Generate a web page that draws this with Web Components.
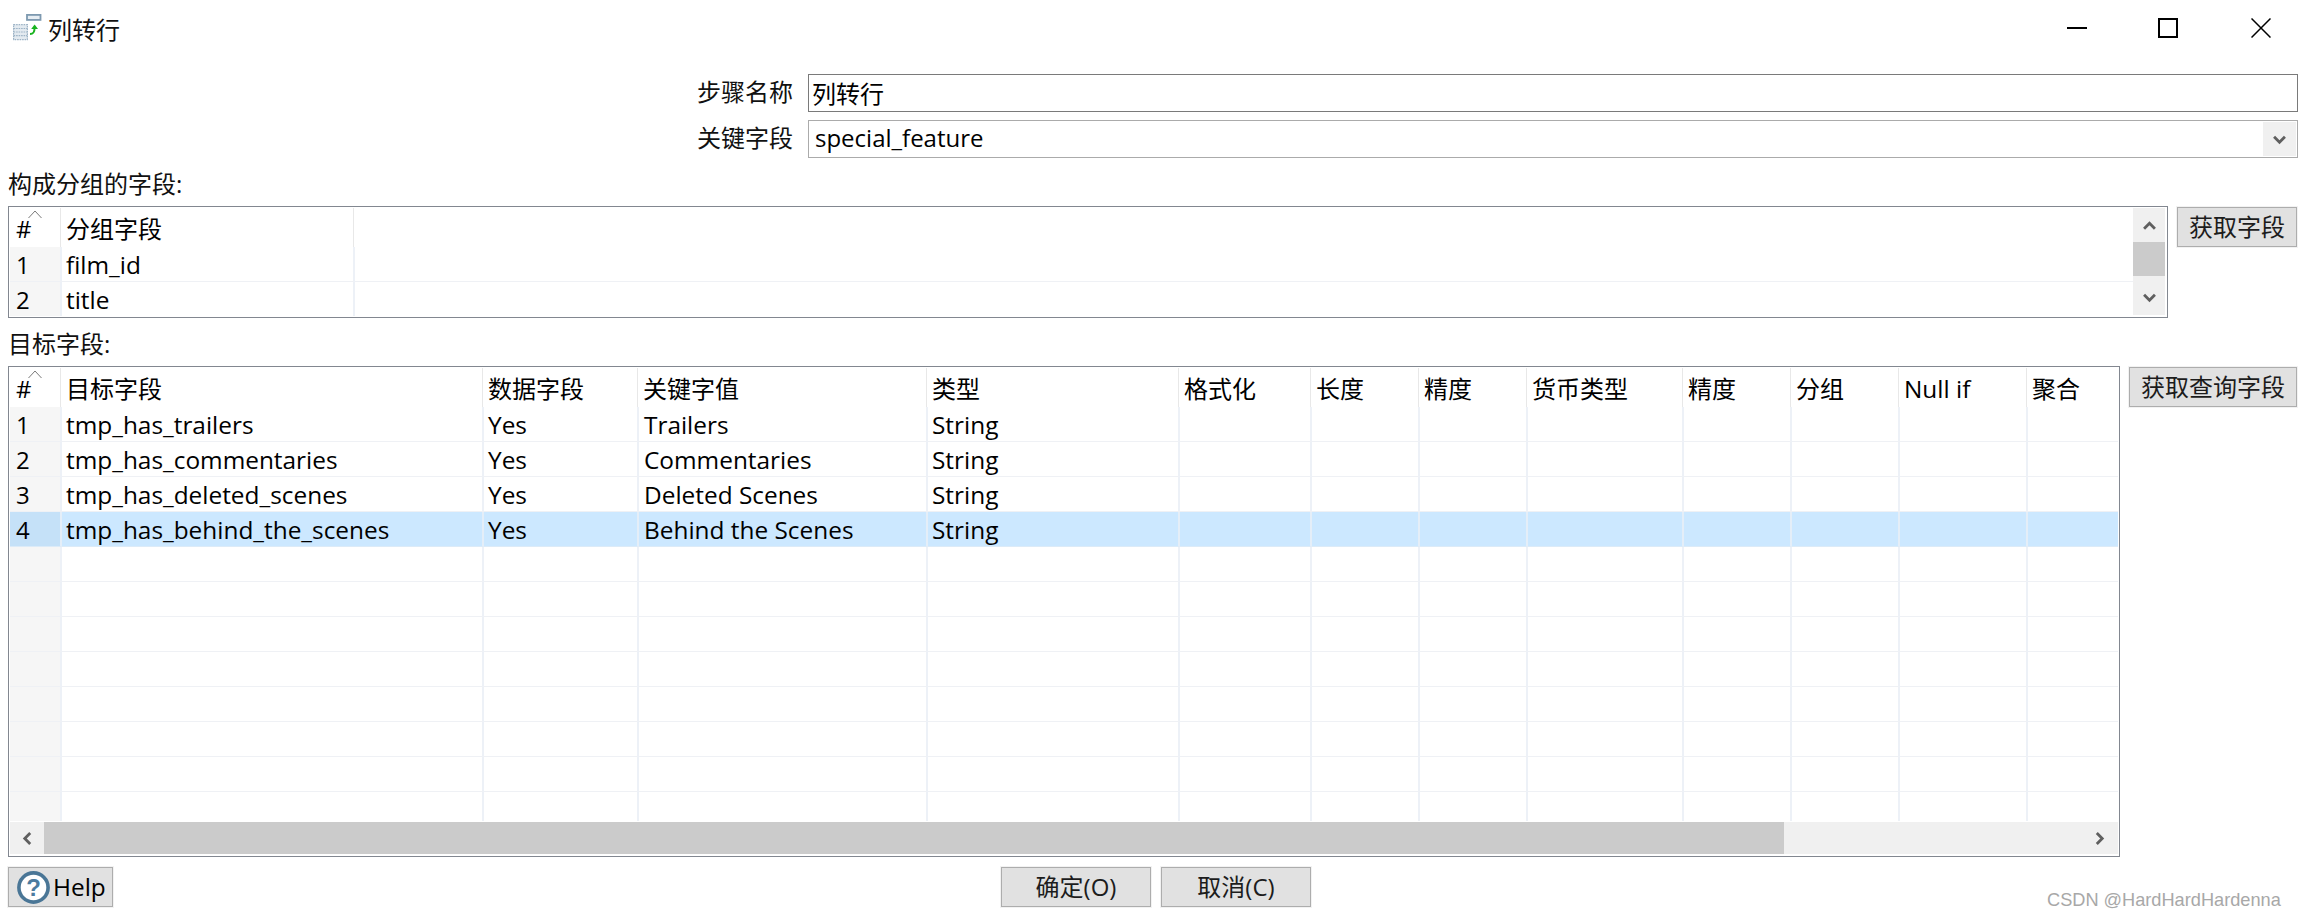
<!DOCTYPE html>
<html lang="zh">
<head>
<meta charset="utf-8">
<title>列转行</title>
<style>
html,body{margin:0;padding:0;background:#fff;}
</style>
</head>
<body>
<ui-app>
  <ui-titlebar>列转行</ui-titlebar>
  <ui-form-row label="步骤名称"><ui-textbox>列转行</ui-textbox></ui-form-row>
  <ui-form-row label="关键字段"><ui-combo>special_feature</ui-combo></ui-form-row>
  <ui-section>构成分组的字段:</ui-section>
  <ui-table-row button="获取字段" style="--table-w:2160px;--btn-w:120px;--h:112px;">
    <ui-table cols="52px 293px 1fr">
      <ui-tr head><ui-td num sort>#</ui-td><ui-td>分组字段</ui-td><ui-td end></ui-td></ui-tr>
      <ui-tr><ui-td num>1</ui-td><ui-td>film_id</ui-td><ui-td end></ui-td></ui-tr>
      <ui-tr><ui-td num>2</ui-td><ui-td>title</ui-td><ui-td end></ui-td></ui-tr>
      <ui-scrollbar slot="v" dir="v"></ui-scrollbar>
    </ui-table>
  </ui-table-row>
  <ui-section>目标字段:</ui-section>
  <ui-table-row button="获取查询字段" style="--table-w:2112px;--btn-w:168px;--h:491px;">
    <ui-table cols="52px 422px 155px 289px 252px 132px 108px 108px 156px 108px 108px 128px 1fr">
      <ui-tr head><ui-td num sort>#</ui-td><ui-td>目标字段</ui-td><ui-td>数据字段</ui-td><ui-td>关键字值</ui-td><ui-td>类型</ui-td><ui-td>格式化</ui-td><ui-td>长度</ui-td><ui-td>精度</ui-td><ui-td>货币类型</ui-td><ui-td>精度</ui-td><ui-td>分组</ui-td><ui-td>Null if</ui-td><ui-td end>聚合</ui-td></ui-tr>
      <ui-tr><ui-td num>1</ui-td><ui-td>tmp_has_trailers</ui-td><ui-td>Yes</ui-td><ui-td>Trailers</ui-td><ui-td>String</ui-td><ui-td></ui-td><ui-td></ui-td><ui-td></ui-td><ui-td></ui-td><ui-td></ui-td><ui-td></ui-td><ui-td></ui-td><ui-td end></ui-td></ui-tr>
      <ui-tr><ui-td num>2</ui-td><ui-td>tmp_has_commentaries</ui-td><ui-td>Yes</ui-td><ui-td>Commentaries</ui-td><ui-td>String</ui-td><ui-td></ui-td><ui-td></ui-td><ui-td></ui-td><ui-td></ui-td><ui-td></ui-td><ui-td></ui-td><ui-td></ui-td><ui-td end></ui-td></ui-tr>
      <ui-tr><ui-td num>3</ui-td><ui-td>tmp_has_deleted_scenes</ui-td><ui-td>Yes</ui-td><ui-td>Deleted Scenes</ui-td><ui-td>String</ui-td><ui-td></ui-td><ui-td></ui-td><ui-td></ui-td><ui-td></ui-td><ui-td></ui-td><ui-td></ui-td><ui-td></ui-td><ui-td end></ui-td></ui-tr>
      <ui-tr sel><ui-td num>4</ui-td><ui-td>tmp_has_behind_the_scenes</ui-td><ui-td>Yes</ui-td><ui-td>Behind the Scenes</ui-td><ui-td>String</ui-td><ui-td></ui-td><ui-td></ui-td><ui-td></ui-td><ui-td></ui-td><ui-td></ui-td><ui-td></ui-td><ui-td></ui-td><ui-td end></ui-td></ui-tr>
      <ui-tr blank></ui-tr><ui-tr blank></ui-tr><ui-tr blank></ui-tr><ui-tr blank></ui-tr><ui-tr blank></ui-tr><ui-tr blank></ui-tr><ui-tr blank></ui-tr><ui-tr blank></ui-tr>
      <ui-scrollbar slot="h" dir="h"></ui-scrollbar>
    </ui-table>
  </ui-table-row>
  <ui-footer>
    <ui-button slot="help" help>Help</ui-button>
    <ui-button>确定(O)</ui-button>
    <ui-button>取消(C)</ui-button>
  </ui-footer>
  <ui-watermark>CSDN @HardHardHardenna</ui-watermark>
</ui-app>
<script>
const FONT = '"Open Sans","Noto Sans CJK SC",sans-serif';
function el(name, css, html, init) {
  customElements.define(name, class extends HTMLElement {
    constructor() {
      super();
      const root = this.attachShadow({mode: 'open'});
      root.innerHTML = '<style>' + css + '</style>' + (typeof html === 'function' ? html(this) : html);
    }
    connectedCallback() { if (init) init(this); }
  });
}
const chev = (d, w, h) => `<svg width="${w}" height="${h}" viewBox="0 0 12 12" fill="none" stroke="#5f5f5f" stroke-width="2.6"><path d="${d}"/></svg>`;
const CH = {
  up: 'M1 9 6 4l5 5',
  down: 'M1 3.5 6 8.5l5-5',
  left: 'M8.5 1 3.5 6l5 5',
  right: 'M3.5 1 8.5 6l-5 5'
};

el('ui-app', `:host{display:flex;flex-direction:column;position:relative;width:2299px;height:916px;box-sizing:border-box;overflow:hidden;background:#fff;color:#000;font-family:${FONT};font-size:24px;}`, '<slot></slot>');

el('ui-titlebar', `
  :host{display:flex;align-items:center;height:56px;margin-bottom:10px;}
  .ico{margin-left:12px;flex:none;}
  .t{margin-left:4px;flex:1;color:#111;}
  .c{display:flex;align-items:center;margin-right:28px;}
  .c svg{display:block;}
`, `
  <svg class="ico" width="32" height="32" viewBox="0 0 32 32">
    <rect x="15" y="2.9" width="13.5" height="5" fill="#e6edf3" stroke="#7d99b0" stroke-width="1.8"/>
    <g fill="#e3eaf0" stroke="#9db3c6" stroke-width="1.2" stroke-dasharray="1.6 .9">
      <rect x="1.6" y="12.6" width="13.8" height="15"/>
      <path d="M1.6 16.5h13.8M1.6 20h13.8M1.6 23.6h13.8" fill="none"/>
    </g>
    <path d="M18 22c3.4 0 4.6-1.6 4.6-6.5" fill="none" stroke="#19b31f" stroke-width="2"/>
    <path d="M19.2 17 22.6 12.6l3.4 4.4z" fill="#19b31f"/>
  </svg>
  <span class="t"><slot></slot></span>
  <span class="c">
    <svg width="20" height="20" viewBox="0 0 20 20" style="margin-right:71px"><path d="M0 10h20" stroke="#000" stroke-width="2"/></svg>
    <svg width="20" height="20" viewBox="0 0 20 20" style="margin-right:73px"><rect x="1" y="1" width="18" height="18" fill="none" stroke="#000" stroke-width="2"/></svg>
    <svg width="20" height="20" viewBox="0 0 20 20"><path d="M.5.5l19 19M19.5.5l-19 19" fill="none" stroke="#000" stroke-width="1.5"/></svg>
  </span>
`);

el('ui-form-row', `
  :host{display:grid;grid-template-columns:800px 1fr;height:38px;margin:8px 1px 0 8px;}
  .l{text-align:right;padding-right:15px;line-height:36px;color:#111;}
`, h => `<div class="l">${h.getAttribute('label')}</div><slot></slot>`);

el('ui-textbox', `
  :host{display:block;box-sizing:border-box;height:38px;border:1px solid #7a7a7a;padding:0 3px;line-height:38px;white-space:nowrap;overflow:hidden;}
`, '<slot></slot>');

el('ui-combo', `
  :host{display:flex;box-sizing:border-box;height:38px;border:1px solid #ababab;padding:1px;}
  .t{flex:1;padding-left:5px;line-height:31px;}
  .b{width:33px;background:#f0f0f0;display:flex;align-items:center;justify-content:center;}
`, `<span class="t"><slot></slot></span><span class="b">${chev(CH.down, 13, 13)}</span>`);

el('ui-section', `:host{display:flex;align-items:center;height:48px;padding-left:8px;color:#111;}`, '<slot></slot>');

el('ui-table-row', `
  :host{display:flex;height:var(--h);padding-left:8px;}
  ::slotted(ui-table){width:var(--table-w);flex:none;}
  ui-button{width:var(--btn-w);height:40px;margin-top:1px;margin-left:auto;margin-right:2px;}
`, h => `<slot></slot><ui-button>${h.getAttribute('button')}</ui-button>`);

el('ui-table', `
  :host{display:flex;flex-direction:column;box-sizing:border-box;height:100%;border:1px solid #828790;padding:1px;background:#fff;}
  .m{display:flex;flex:1;min-height:0;}
  .rows{flex:1;min-width:0;overflow:hidden;}
`, `<div class="m"><div class="rows"><slot></slot></div><slot name="v"></slot></div><slot name="h"></slot>`,
  h => h.style.setProperty('--cols', h.getAttribute('cols')));

el('ui-tr', `
  :host{display:grid;grid-template-columns:var(--cols);height:35px;--bg:#fff;--num:#f6f6f6;--vl:#edf1f7;--hl:#eff1f5;}
  :host([head]){height:39px;--num:#fff;--vl:#e8e8e8;}
  :host([sel]){--bg:#cce8ff;--num:#c5e1f8;--vl:#e4eef8;--hl:#dcebf8;}
  :host(:not([head])) ::slotted(ui-td:nth-child(4)){padding-left:5px;}
`, '<slot></slot>', h => {
  if (h.hasAttribute('blank') && !h.children.length) {
    const n = getComputedStyle(h).getPropertyValue('--cols').trim().split(/\s+/).length;
    for (let i = 0; i < n; i++) {
      const td = document.createElement('ui-td');
      if (i === 0) td.setAttribute('num', '');
      if (i === n - 1) td.setAttribute('end', '');
      h.appendChild(td);
    }
  }
});

el('ui-td', `
  :host{display:block;position:relative;box-sizing:border-box;min-width:0;padding-left:4px;background:var(--bg);border-right:2px solid var(--vl);border-bottom:1px solid var(--hl);white-space:nowrap;overflow:hidden;line-height:36px;}
  :host(:not([num])[latin]){font-size:24.4px;}
  :host([num]){background:var(--num);padding-left:6px;}
  :host([end]){border-right:0;}
  :host-context(ui-tr[head]){border-right-width:1px;margin-right:1px;border-bottom:0;line-height:41px;}
  :host-context(ui-tr[head]):host([end]){border-right:0;}
  svg{position:absolute;left:18px;top:2px;}
`, h => `<slot></slot>${h.hasAttribute('sort') ? '<svg width="14" height="9" viewBox="0 0 14 9" fill="none" stroke="#7a7a7a" stroke-width="1"><path d="M.5 8 7 1l6.5 7"/></svg>' : ''}`,
  h => { if (h.textContent && /^[\x20-\x7e]+$/.test(h.textContent)) h.setAttribute('latin', ''); });

el('ui-scrollbar', `
  :host{display:flex;background:#f0f0f0;flex:none;}
  :host([dir=v]){flex-direction:column;width:32px;margin-right:1px;margin-bottom:1px;}
  :host([dir=h]){height:32px;margin-bottom:1px;margin-top:1px;}
  .a{display:flex;align-items:center;justify-content:center;flex:none;width:34px;height:34px;}
  :host([dir=h]) .a{height:32px;}
  :host([dir=v]) .a{width:32px;}
  .th{background:#cbcbcb;flex:none;}
  :host([dir=v]) .th{height:34px;}
  :host([dir=h]) .th{width:1740px;}
  .sp{flex:1;}
  :host([dir=h]) .r{margin-right:2px}
`, h => h.getAttribute('dir') === 'v'
  ? `<span class="a">${chev(CH.up, 13, 13)}</span><span class="th"></span><span class="sp"></span><span class="a" style="height:36px">${chev(CH.down, 13, 13)}</span>`
  : `<span class="a">${chev(CH.left, 13, 13)}</span><span class="th"></span><span class="sp"></span><span class="a r">${chev(CH.right, 13, 13)}</span>`);

el('ui-button', `
  :host{display:flex;align-items:center;justify-content:center;box-sizing:border-box;height:40px;background:#e1e1e1;border:1px solid #adadad;box-shadow:0 0 0 1px #f2f2f2;color:#1c1c1c;line-height:36px;white-space:nowrap;}
  :host([help]){justify-content:flex-start;padding-left:8px;gap:3px;color:#000;font-size:24.4px;}
  svg{display:block;flex:none;}
  svg text{font-family:"Liberation Sans",sans-serif;font-weight:700;font-size:24px;fill:#4b7b9f;}
`, h => (h.hasAttribute('help') ? `<svg width="33" height="33" viewBox="0 0 33 33"><circle cx="16.5" cy="16.5" r="14.6" fill="#fff" stroke="#4a7696" stroke-width="3.6"/><text x="16.5" y="25" text-anchor="middle">?</text></svg>` : '') + '<slot></slot>');

el('ui-footer', `
  :host{display:grid;grid-template-columns:993px 1fr;padding:10px 0 0 8px;}
  .h{width:105px;}
  .mid{display:flex;gap:10px;}
  ::slotted(ui-button:not([help])){width:150px;flex:none;}
`, `<div class="h"><slot name="help"></slot></div><div class="mid"><slot></slot></div>`);

el('ui-watermark', `:host{position:absolute;left:2047px;top:889px;font-family:"Liberation Sans",sans-serif;font-size:18.2px;line-height:22px;color:#a8a8a8;white-space:nowrap;}`, '<slot></slot>');
</script>
</body>
</html>
